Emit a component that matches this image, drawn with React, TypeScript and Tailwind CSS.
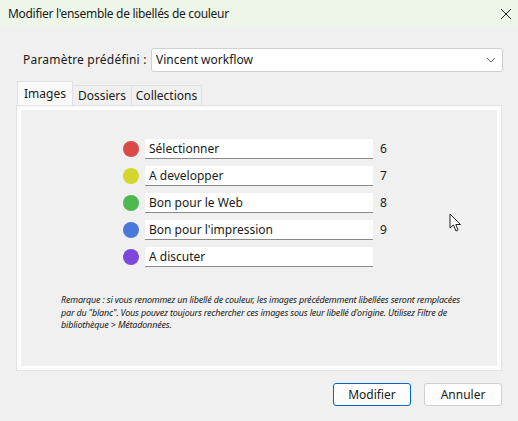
import React from "react";

const labels = [
  { color: "#db4848", text: "Sélectionner", key: "6" },
  { color: "#d6d62a", text: "A developper", key: "7" },
  { color: "#4db84d", text: "Bon pour le Web", key: "8" },
  { color: "#4a78d6", text: "Bon pour l'impression", key: "9" },
  { color: "#7c48dc", text: "A discuter", key: "" },
];

export default function App() {
  return (
    <div
      className="relative w-[518px] h-[421px] bg-[#f0f0f0] text-[12px] text-[#1a1a1a] overflow-hidden"
      style={{ fontFamily: '"Noto Sans", "Open Sans", sans-serif' }}
    >
      <div className="h-[27px] bg-[#eef6ea] flex items-center justify-between pl-[8px] pr-[4px]">
        <span className="tracking-[-0.3px]">Modifier l'ensemble de libellés de couleur</span>
        <svg width="14" height="14" viewBox="0 0 14 14" className="mr-[1px]">
          <path d="M2 2 L12 12 M12 2 L2 12" stroke="#222" strokeWidth="1" />
        </svg>
      </div>

      <div className="flex items-center mt-[21px] pl-[23px] pr-[15px]">
        <span className="w-[128px] tracking-[0.2px]">Paramètre prédéfini :</span>
        <div className="flex-1 h-[24px] bg-white border border-[#d0d0d0] rounded-[3px] flex items-center justify-between px-[4px]">
          <span className="text-[#1a1a1a]">Vincent workflow</span>
          <svg width="10" height="6" viewBox="0 0 10 6" className="mr-[2px]">
            <path d="M1 1 L5 5 L9 1" stroke="#666" fill="none" strokeWidth="1" />
          </svg>
        </div>
      </div>

      <div className="flex items-end mt-[9px] ml-[17px] h-[24px]">
        <div className="h-[24px] w-[56px] bg-[#f9f9f9] border border-b-0 border-[#e0e0e0] flex items-center justify-center relative z-10">
          Images
        </div>
        <div className="h-[20px] w-[59px] bg-[#f0f0f0] border border-l-0 border-b-0 border-[#e0e0e0] flex items-center justify-center">
          Dossiers
        </div>
        <div className="h-[20px] w-[70px] bg-[#f0f0f0] border border-l-0 border-b-0 border-[#e0e0e0] flex items-center justify-center">
          Collections
        </div>
      </div>

      <div className="ml-[16px] w-[486px] h-[266px] border border-[#e3e3e3] bg-[#fafafa] p-[2px]">
        <div className="h-full w-full border-2 border-white bg-[#f0f0f0] flex flex-col">
          <div className="flex flex-col gap-[7px] mt-[29px] ml-[102px]">
            {labels.map((l) => (
              <div key={l.text} className="flex items-center h-[20px]">
                <div className="w-[16px] h-[16px] rounded-full" style={{ backgroundColor: l.color }} />
                <div className="ml-[6px] w-[228px] h-[20px] bg-white border-b border-[#8a8a8a] flex items-center pl-[4px]">
                  {l.text}
                </div>
                <span className="ml-[7px]">{l.key}</span>
              </div>
            ))}
          </div>
          <p className="mt-[27px] ml-[40px] w-[404px] text-[9px] italic leading-[12.5px] text-[#1a1a1a] tracking-[-0.2px]">
            Remarque : si vous renommez un libellé de couleur, les images précédemment libellées seront remplacées par du "blanc". Vous pouvez toujours rechercher ces images sous leur libellé d'origine. Utilisez Filtre de bibliothèque &gt; Métadonnées.
          </p>
        </div>
      </div>

      <div className="flex justify-end gap-[13px] mt-[12px] pr-[16px]">
        <button className="w-[78px] h-[23px] bg-[#fdfdfd] border border-[#0067c0] rounded-[3px] text-[12px]">
          Modifier
        </button>
        <button className="w-[78px] h-[23px] bg-[#fdfdfd] border border-[#d0d0d0] rounded-[3px] text-[12px]">
          Annuler
        </button>
      </div>

      <svg className="absolute left-[449px] top-[213px]" width="14" height="20" viewBox="0 0 14 20">
        <path d="M1 1 L1 15 L4.5 12 L7 18 L9 17 L6.8 11.5 L11.5 11.5 Z" fill="white" stroke="#222" strokeWidth="1" strokeLinejoin="round" />
      </svg>
    </div>
  );
}
